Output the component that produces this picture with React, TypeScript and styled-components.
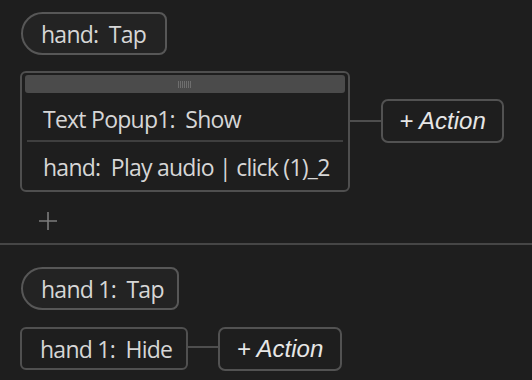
import React from "react";
import styled, { createGlobalStyle } from "styled-components";

const Global = createGlobalStyle`
  html, body { margin: 0; padding: 0; background: #1e1e1e; }
  #root { width: 532px; height: 380px; overflow: hidden; }
`;

const Page = styled.div`
  width: 532px;
  height: 380px;
  background: #1e1e1e;
  font-family: "Open Sans", "Noto Sans", sans-serif;
  color: #d6d6d6;
  display: flex;
  flex-direction: column;
  box-sizing: border-box;
`;

const Section = styled.div<{ $pt: number; $h: number }>`
  display: flex;
  flex-direction: column;
  align-items: flex-start;
  padding: ${(p) => p.$pt}px 0 0 20px;
  height: ${(p) => p.$h}px;
  box-sizing: border-box;
`;

const Label = styled.span`
  white-space: pre;
  font-size: 23px;
  letter-spacing: -0.75px;
  line-height: 1;
`;

const Trigger = styled.div<{ $w: number }>`
  box-sizing: border-box;
  width: ${(p) => p.$w}px;
  height: 43px;
  margin-left: 1px;
  border: 2px solid #575757;
  border-radius: 22px 8px 8px 22px;
  background: #232323;
  display: flex;
  align-items: center;
  padding: 2px 0 0 18px;
`;

const Row = styled.div<{ $mt: number }>`
  display: flex;
  align-items: flex-start;
  margin-top: ${(p) => p.$mt}px;
`;

const Group = styled.div`
  box-sizing: border-box;
  width: 330px;
  border: 2px solid #4f4f4f;
  border-radius: 6px;
  padding: 2px 3px 3px 3px;
  display: flex;
  flex-direction: column;
`;

const Handle = styled.div`
  height: 18px;
  background: #4b4b4b;
  border-radius: 3px;
  display: flex;
  align-items: center;
  justify-content: center;
`;

const Grip = styled.div`
  width: 14px;
  height: 7px;
  background-image: repeating-linear-gradient(90deg, #6e6e6e 0 1px, transparent 1px 2px);
`;

const ActionItem = styled.div<{ $border?: boolean }>`
  height: 47px;
  display: flex;
  align-items: center;
  padding: 6px 0 0 16px;
  box-sizing: border-box;
  border-top: ${(p) => (p.$border ? "2px solid #3f3f3f" : "none")};
  margin: 0 2px;
`;

const Single = styled.div<{ $w: number }>`
  box-sizing: border-box;
  width: ${(p) => p.$w}px;
  height: 43px;
  border: 2px solid #505050;
  border-radius: 6px;
  display: flex;
  align-items: center;
  padding: 2px 0 0 18px;
`;

const Connector = styled.div<{ $mt: number; $w: number }>`
  width: ${(p) => p.$w}px;
  height: 2px;
  background: #4e4e4e;
  margin-top: ${(p) => p.$mt}px;
`;

const AddAction = styled.div<{ $w: number; $mt: number }>`
  box-sizing: border-box;
  width: ${(p) => p.$w}px;
  height: 44px;
  margin-top: ${(p) => p.$mt}px;
  border: 2px solid #525252;
  border-radius: 7px;
  display: flex;
  align-items: center;
  justify-content: center;
  font-family: "Liberation Sans", Arial, sans-serif;
  font-style: italic;
  font-size: 24px;
  color: #e6e6e6;
  padding-bottom: 1px;
  white-space: pre;
`;

const PlusButton = styled.div`
  margin: 19px 0 0 18px;
  width: 20px;
  height: 20px;
  display: flex;
`;

const Divider = styled.div`
  height: 2px;
  background: #464646;
  width: 100%;
`;

export default function App() {
  return (
    <Page>
      <Global />
      <Section $pt={12} $h={243}>
        <Trigger $w={146}>
          <Label>{"hand:  Tap"}</Label>
        </Trigger>
        <Row $mt={16}>
          <Group>
            <Handle>
              <Grip />
            </Handle>
            <ActionItem>
              <Label>{"Text Popup1:  Show"}</Label>
            </ActionItem>
            <ActionItem $border>
              <Label>{"hand:  Play audio | click (1)_2"}</Label>
            </ActionItem>
          </Group>
          <Connector $mt={49} $w={31} />
          <AddAction $w={123} $mt={28}>{"+ Action"}</AddAction>
        </Row>
        <PlusButton>
          <svg width="20" height="20" viewBox="0 0 20 20">
            <path d="M10 1v18M1 10h18" stroke="#7c7c7c" strokeWidth="1.6" fill="none" />
          </svg>
        </PlusButton>
      </Section>
      <Divider />
      <Section $pt={22} $h={135}>
        <Trigger $w={158}>
          <Label>{"hand 1:  Tap"}</Label>
        </Trigger>
        <Row $mt={17}>
          <Single $w={168}>
            <Label>{"hand 1:  Hide"}</Label>
          </Single>
          <Connector $mt={19} $w={30} />
          <AddAction $w={124} $mt={0}>{"+ Action"}</AddAction>
        </Row>
      </Section>
    </Page>
  );
}
